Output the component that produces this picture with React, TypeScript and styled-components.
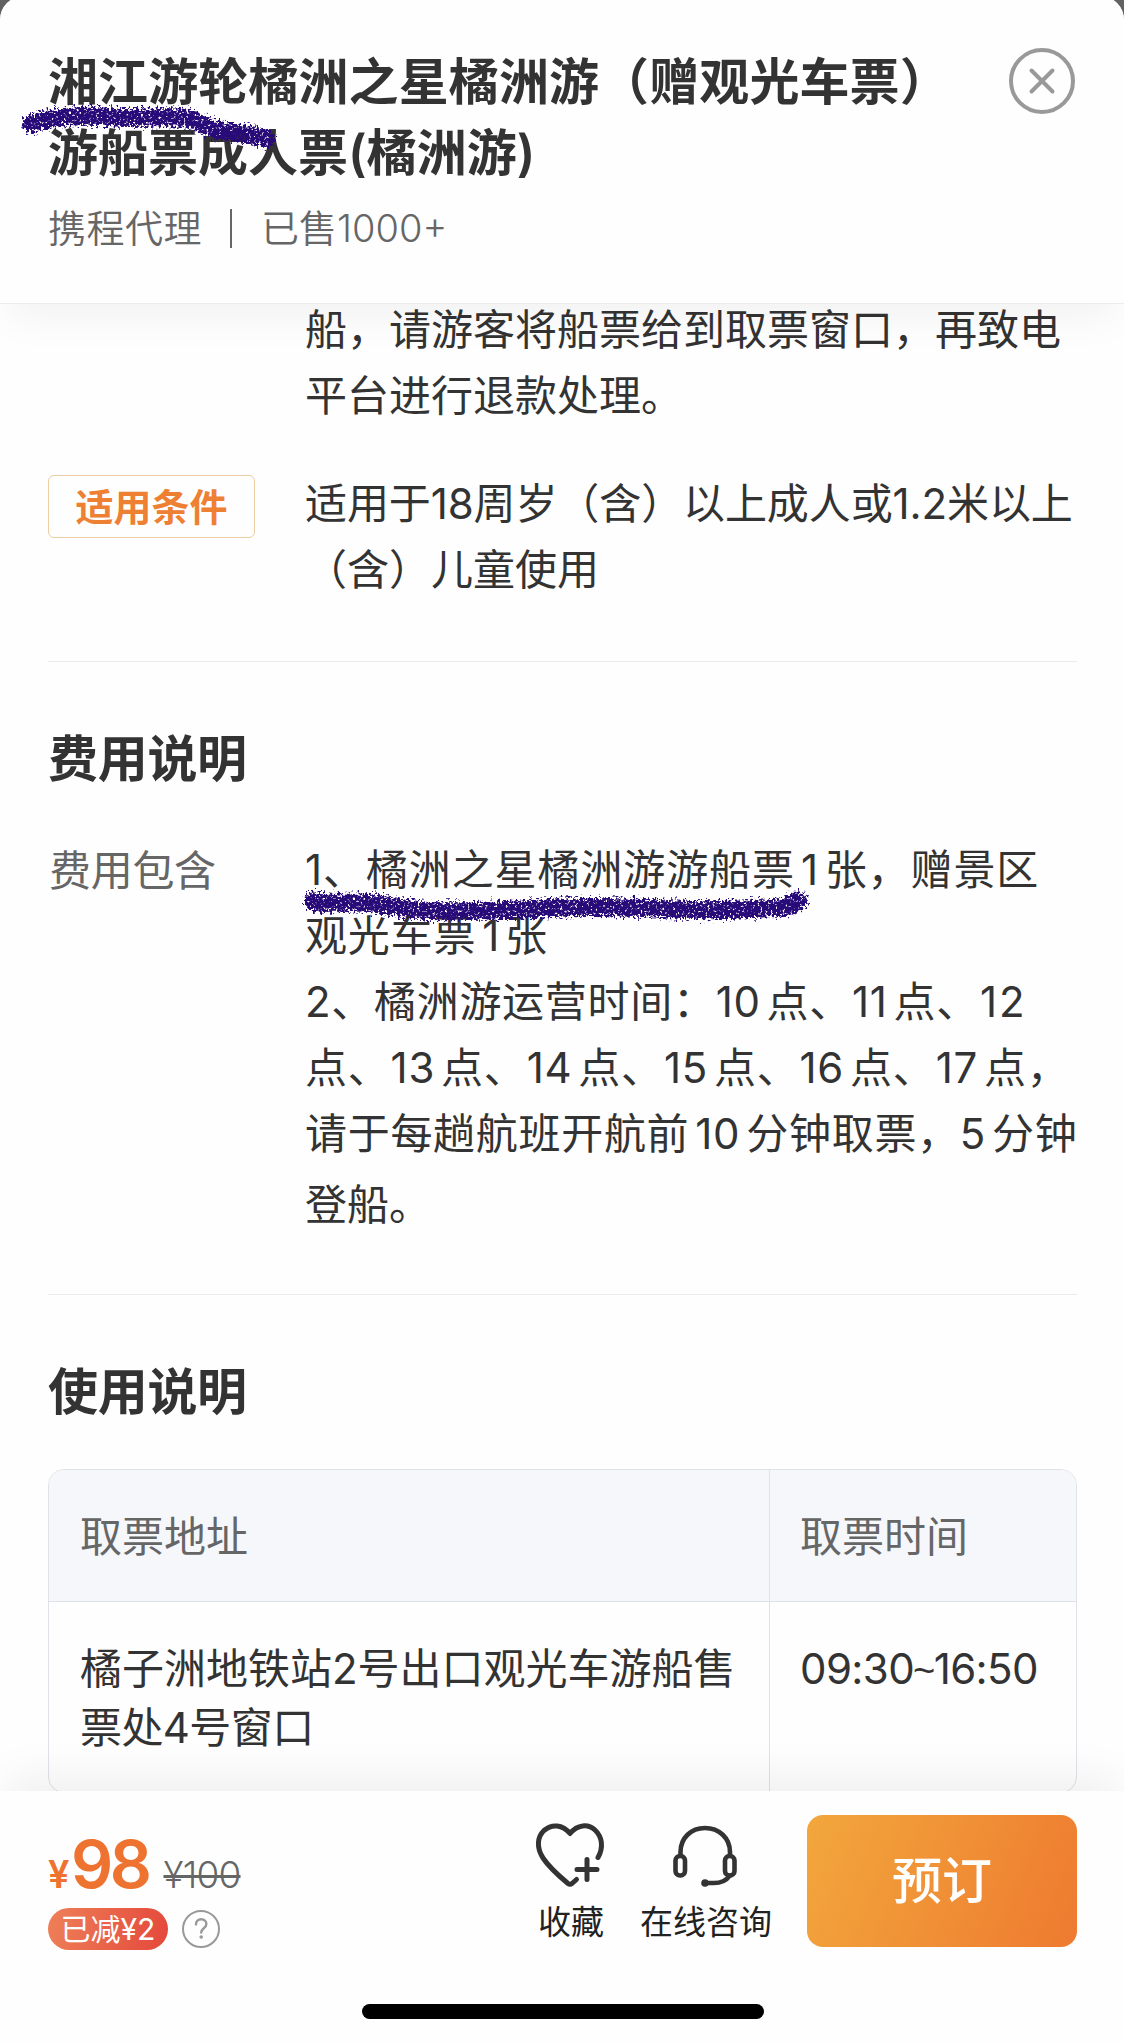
import React from "react";
import styled, { createGlobalStyle } from "styled-components";

const INK = "#333333";
const MUTED = "#666666";

const GlobalStyle = createGlobalStyle`
  * { box-sizing: border-box; }
  html, body { margin: 0; padding: 0; background: #626262; }
  body {
    font-family: Inter, "Noto Sans CJK SC", "Noto Sans", sans-serif;
    color: ${INK};
    width: 1124px;
    overflow: hidden;
  }
  h1, h2, p { margin: 0; font-weight: inherit; }
  button { font: inherit; border: 0; padding: 0; background: none; color: inherit; }
`;

const Screen = styled.main`
  width: 1124px;
  height: 2043px;
  overflow: hidden;
  display: flex;
  flex-direction: column;
`;

const Sheet = styled.section`
  flex: none;
  height: 2047px;
  margin-top: -4px;
  display: flex;
  flex-direction: column;
  background: #fefefe;
  border-radius: 24px 24px 0 0;
`;

const Header = styled.header`
  position: relative;
  z-index: 1;
  flex: none;
  height: 308px;
  padding: 51px 49px 0 48px;
  display: flex;
  justify-content: space-between;
  align-items: flex-start;
  background: #fefefe;
  border-bottom: 1px solid #ececec;
  border-radius: 24px 24px 0 0;
  box-shadow: 0 20px 44px -8px rgba(0, 0, 0, 0.055);
`;

const Title = styled.h1`
  font-size: 50px;
  line-height: 71px;
  font-weight: 600;
  white-space: nowrap;
`;

const Line = styled.span<{ $track?: number; $height?: number }>`
  display: block;
  white-space: nowrap;
  letter-spacing: ${(p) => p.$track ?? 0}px;
  ${(p) => (p.$height ? `line-height: ${p.$height}px;` : "")}
`;

const Meta = styled.div`
  margin-top: 19px;
  height: 40px;
  display: flex;
  align-items: center;
  font-size: 38px;
  line-height: 40px;
  color: ${MUTED};
`;

const MetaText = styled.span<{ $track?: number }>`
  font-weight: 350;
  letter-spacing: ${(p) => p.$track ?? 0}px;
`;

const MetaRule = styled.i`
  width: 2px;
  height: 39px;
  margin: 0 29px 0 28px;
  background: ${MUTED};
`;

const CloseButton = styled.button`
  width: 66px;
  height: 66px;
  margin-top: 1px;
  svg { display: block; }
`;

const Scribble = styled.svg<{ $x: number; $y: number }>`
  position: absolute;
  left: ${(p) => p.$x}px;
  top: ${(p) => p.$y}px;
  pointer-events: none;
  overflow: visible;
`;

const Content = styled.div`
  flex: 1;
  min-height: 0;
  overflow: hidden;
`;

const Scroll = styled.div`
  margin-top: -7px;
  padding: 0 47px 0 48px;
`;

const Row = styled.div<{ $top?: number }>`
  position: relative;
  margin-top: ${(p) => p.$top ?? 0}px;
  display: grid;
  grid-template-columns: 257px 1fr;
  align-items: start;
`;

const RowText = styled.div`
  font-size: 42px;
  line-height: 66px;
`;

const RowLabel = styled.div`
  font-size: 42px;
  line-height: 67px;
  color: ${MUTED};
  letter-spacing: -0.3px;
  padding-left: 1px;
`;

const Tag = styled.span`
  margin-top: 4px;
  width: 207px;
  height: 63px;
  border: 1px solid #eecda4;
  border-radius: 6px;
  text-align: center;
  font-size: 38px;
  line-height: 62px;
  font-weight: 600;
  color: #ee8033;
`;

const Divider = styled.hr<{ $top: number }>`
  margin: ${(p) => p.$top}px 0 0;
  border: 0;
  height: 1px;
  background: #ececec;
`;

const SectionTitle = styled.h2`
  margin-top: 67px;
  font-size: 50px;
  line-height: 60px;
  font-weight: 600;
  letter-spacing: -0.3px;
`;

const Num = styled.span<{ $l?: number; $r?: number; $track?: number }>`
  margin-left: ${(p) => p.$l ?? 0}px;
  margin-right: ${(p) => p.$r ?? 0}px;
  letter-spacing: ${(p) => p.$track ?? 0.7}px;
`;

const Table = styled.div`
  margin-top: 47px;
  height: 324px;
  display: grid;
  grid-template-columns: 721px 1fr;
  grid-template-rows: 132px 1fr;
  border: 1px solid #dfe3e9;
  border-radius: 16px;
  overflow: hidden;
  font-size: 42px;
  line-height: 59px;
`;

const Cell = styled.div<{ $head?: boolean; $last?: boolean }>`
  padding: 37px 0 0 ${(p) => (p.$last ? 30 : 31)}px;
  color: ${(p) => (p.$head ? MUTED : INK)};
  background: ${(p) => (p.$head ? "#f5f7fa" : "transparent")};
  border-right: ${(p) => (p.$last ? "0" : "1px solid #dfe3e9")};
  border-bottom: ${(p) => (p.$head ? "1px solid #dfe3e9" : "0")};
`;

const Tilde = styled.span`
  margin: 0 -1px;
  font-family: "Liberation Sans", sans-serif;
  font-size: 38px;
  line-height: 1;
`;

const Footer = styled.footer`
  position: relative;
  z-index: 1;
  flex: none;
  height: 252px;
  padding: 24px 47px 0 48px;
  display: flex;
  flex-direction: column;
  background: #fefefe;
  box-shadow: 0 -20px 44px -8px rgba(0, 0, 0, 0.065);
`;

const Actions = styled.div`
  height: 132px;
  display: flex;
`;

const PriceBlock = styled.div`
  width: 487px;
  padding-top: 16px;
`;

const Prices = styled.div`
  height: 66px;
  display: flex;
  align-items: baseline;
  line-height: 66px;
`;

const Currency = styled.span`
  width: 23px;
  font-size: 38px;
  font-weight: 600;
  color: #ee7230;
`;

const Price = styled.span`
  font-size: 66px;
  font-weight: 600;
  letter-spacing: -3.5px;
  color: #ee7230;
`;

const OldPrice = styled.s`
  margin-left: 15px;
  font-size: 37px;
  font-weight: 300;
  letter-spacing: -0.8px;
  color: ${MUTED};
  text-decoration-thickness: 3px;
`;

const Discounts = styled.div`
  margin-top: 11px;
  height: 42px;
  display: flex;
  align-items: center;
  gap: 14px;
`;

const Badge = styled.span`
  width: 120px;
  height: 42px;
  display: flex;
  align-items: center;
  justify-content: center;
  border-radius: 21px;
  background: linear-gradient(100deg, #ee8058, #e4483b);
  color: #ffffff;
  font-size: 30px;
  line-height: 42px;
`;

const Help = styled.span`
  width: 38px;
  height: 38px;
  display: block;
  svg { display: block; }
`;

const IconAction = styled.button<{ $width: number; $left?: number }>`
  width: ${(p) => p.$width}px;
  margin-left: ${(p) => p.$left ?? 0}px;
  display: flex;
  flex-direction: column;
  align-items: center;
  white-space: nowrap;
  font-size: 33px;
  line-height: 40px;
  color: #222222;
  svg { display: block; margin: 6px 0 13px; }
`;

const ActionLabel = styled.span`
  padding-left: 2px;
`;

const BookButton = styled.button`
  width: 270px;
  height: 132px;
  margin-left: auto;
  border-radius: 16px;
  background: linear-gradient(112deg, #f2a73c, #ee7a30);
  color: #ffffff;
  font-size: 50px;
  line-height: 132px;
  font-weight: 500;
`;

const HomeIndicator = styled.div`
  width: 402px;
  height: 15px;
  margin: 57px auto 0;
  border-radius: 7.5px;
  background: #000000;
`;

interface CrayonProps {
  id: string;
  d: string;
  x: number;
  y: number;
  w: number;
  h: number;
}

/* A hand-drawn crayon stroke: ragged edge from displacement, grain from thresholded noise. */
const Crayon = ({ id, d, x, y, w, h }: CrayonProps) => (
  <Scribble $x={x} $y={y} width={w} height={h} viewBox={`0 0 ${w} ${h}`}>
    <defs>
      <filter
        id={id}
        x="0"
        y="0"
        width={w}
        height={h}
        filterUnits="userSpaceOnUse"
        colorInterpolationFilters="sRGB"
      >
        <feTurbulence type="fractalNoise" baseFrequency="0.4" numOctaves="2" seed="7" result="noise" />
        <feDisplacementMap in="SourceGraphic" in2="noise" scale="15" xChannelSelector="R" yChannelSelector="G" result="rough" />
        <feColorMatrix in="noise" type="matrix" values="0 0 0 0 0  0 0 0 0 0  0 0 0 0 0  0 0 6 0 -1.4" result="grain" />
        <feComposite in="rough" in2="grain" operator="in" />
      </filter>
    </defs>
    <g filter={`url(#${id})`} fill="none" stroke="#280a78" strokeLinecap="round" strokeLinejoin="round">
      <path d={d} strokeWidth="18" />
    </g>
  </Scribble>
);

const CloseIcon = () => (
  <svg width="66" height="66" viewBox="0 0 66 66" fill="none" stroke="#999999" strokeWidth="4" strokeLinecap="round">
    <circle cx="33" cy="33" r="31" />
    <path d="M22.5 22.5 43.5 43.5M43.5 22.5 22.5 43.5" />
  </svg>
);

const HelpIcon = () => (
  <svg width="38" height="38" viewBox="0 0 38 38" fill="none" stroke="#999999" strokeLinecap="round">
    <circle cx="19" cy="19" r="18" strokeWidth="2" />
    <path d="M14 14.4c0-3 2.200-5.200 5.200-5.200s5.200 2.100 5.200 4.900c0 4.100-5.200 4.300-5.200 8.500" strokeWidth="2.400" />
    <circle cx="19.200" cy="27" r="1.800" fill="#999999" stroke="none" />
  </svg>
);

const HeartPlusIcon = () => (
  <svg width="70" height="68" viewBox="0 0 70 68" fill="none" stroke="#333333" strokeWidth="5" strokeLinecap="round" strokeLinejoin="round">
    <path d="M41.500 58.500 37 62.500Q35 64 33 62.500C24 55 14 46 8 37C1.500 27 2 16 9 9.500C17 2.500 27.500 3.500 35 12.500C42.500 3.500 53 2.500 60 9C67.500 16 68.500 27 63 36.500" />
    <path d="M52 38.500V58.500M42 48.500H62" />
  </svg>
);

const HeadsetIcon = () => (
  <svg width="70" height="68" viewBox="0 0 70 68" fill="none" stroke="#333333" strokeWidth="4.600" strokeLinecap="round" strokeLinejoin="round">
    <path d="M10.500 34V31C10.500 17 21 7 35 7S60 17 60 31V34" />
    <rect x="5.500" y="35" width="9.500" height="19.500" rx="4.500" />
    <rect x="55" y="35" width="9.500" height="19.500" rx="4.500" />
    <path d="M59.500 55C56 60 50 62 44 62H35" />
    <circle cx="35" cy="62" r="3.800" fill="#333333" stroke="none" />
  </svg>
);

export default function App() {
  return (
    <>
      <GlobalStyle />
      <Screen>
        <Sheet>
          <Header>
            <div>
              <Title>
                <Line $track={0.1}>湘江游轮橘洲之星橘洲游（赠观光车票）</Line>
                <Line>游船票成人票(橘洲游)</Line>
              </Title>
              <Meta>
                <MetaText $track={0.5}>携程代理</MetaText>
                <MetaRule />
                <MetaText>已售1000+</MetaText>
              </Meta>
            </div>
            <CloseButton aria-label="关闭">
              <CloseIcon />
            </CloseButton>
            <Crayon
              id="crayon-title"
              x={9}
              y={101}
              w={290}
              h={66}
              d="M22 27C34 22 48 20 70 19S100 21 120 21S160 19 176 21C190 23 196 31 208 33S244 37 257 42"
            />
          </Header>

          <Content>
            <Scroll>
              <Row>
                <span />
                <RowText>
                  <Line>船，请游客将船票给到取票窗口，再致电</Line>
                  <Line>平台进行退款处理。</Line>
                </RowText>
              </Row>
              <Row $top={42}>
                <Tag>适用条件</Tag>
                <RowText>
                  <Line $track={-0.1}>适用于18周岁（含）以上成人或1.2米以上</Line>
                  <Line>（含）儿童使用</Line>
                </RowText>
              </Row>
              <Divider $top={58} />

              <SectionTitle>费用说明</SectionTitle>
              <Row $top={48}>
                <RowLabel>费用包含</RowLabel>
                <RowText>
                  <Line $track={0.9}>
                    1、橘洲之星橘洲游游船票<Num $l={6} $r={6}>1</Num>张，赠景区
                  </Line>
                  <Line $track={0.8}>
                    观光车票<Num $l={6} $r={5}>1</Num>张
                  </Line>
                  <Line $track={0.7}>
                    2、橘洲游运营时间：<Num $r={6}>10</Num>点、<Num $r={6}>11</Num>点、<Num $l={1} $track={2}>12</Num>
                  </Line>
                  <Line $track={0.8}>
                    点、<Num $r={6}>13</Num>点、<Num $r={6}>14</Num>点、<Num $r={6}>15</Num>点、
                    <Num $r={6}>16</Num>点、<Num $r={6}>17</Num>点，
                  </Line>
                  <Line $track={0.7}>
                    请于每趟航班开航前<Num $l={6} $r={6}>10</Num>分钟取票，<Num $r={6}>5</Num>分钟
                  </Line>
                  <Line $height={76}>登船。</Line>
                </RowText>
                <Crayon
                  id="crayon-fee"
                  x={245}
                  y={46}
                  w={530}
                  h={54}
                  d="M20 18C34 22 54 18 76 20S110 27 140 28S220 27 260 25S330 24 370 26S450 27 480 25Q498 25 505 17"
                />
              </Row>
              <Divider $top={51} />

              <SectionTitle>使用说明</SectionTitle>
              <Table>
                <Cell $head>取票地址</Cell>
                <Cell $head $last>取票时间</Cell>
                <Cell>
                  <Line>橘子洲地铁站2号出口观光车游船售</Line>
                  <Line $track={-0.6}>票处4号窗口</Line>
                </Cell>
                <Cell $last>
                  <Line $track={-0.6}>
                    09:30<Tilde>~</Tilde>16:50
                  </Line>
                </Cell>
              </Table>
            </Scroll>
          </Content>

          <Footer>
            <Actions>
              <PriceBlock>
                <Prices>
                  <Currency>¥</Currency>
                  <Price>98</Price>
                  <OldPrice>¥100</OldPrice>
                </Prices>
                <Discounts>
                  <Badge>已减¥2</Badge>
                  <Help>
                    <HelpIcon />
                  </Help>
                </Discounts>
              </PriceBlock>
              <IconAction $width={70}>
                <HeartPlusIcon />
                <ActionLabel>收藏</ActionLabel>
              </IconAction>
              <IconAction $width={132} $left={34}>
                <HeadsetIcon />
                <ActionLabel>在线咨询</ActionLabel>
              </IconAction>
              <BookButton>预订</BookButton>
            </Actions>
            <HomeIndicator />
          </Footer>
        </Sheet>
      </Screen>
    </>
  );
}
